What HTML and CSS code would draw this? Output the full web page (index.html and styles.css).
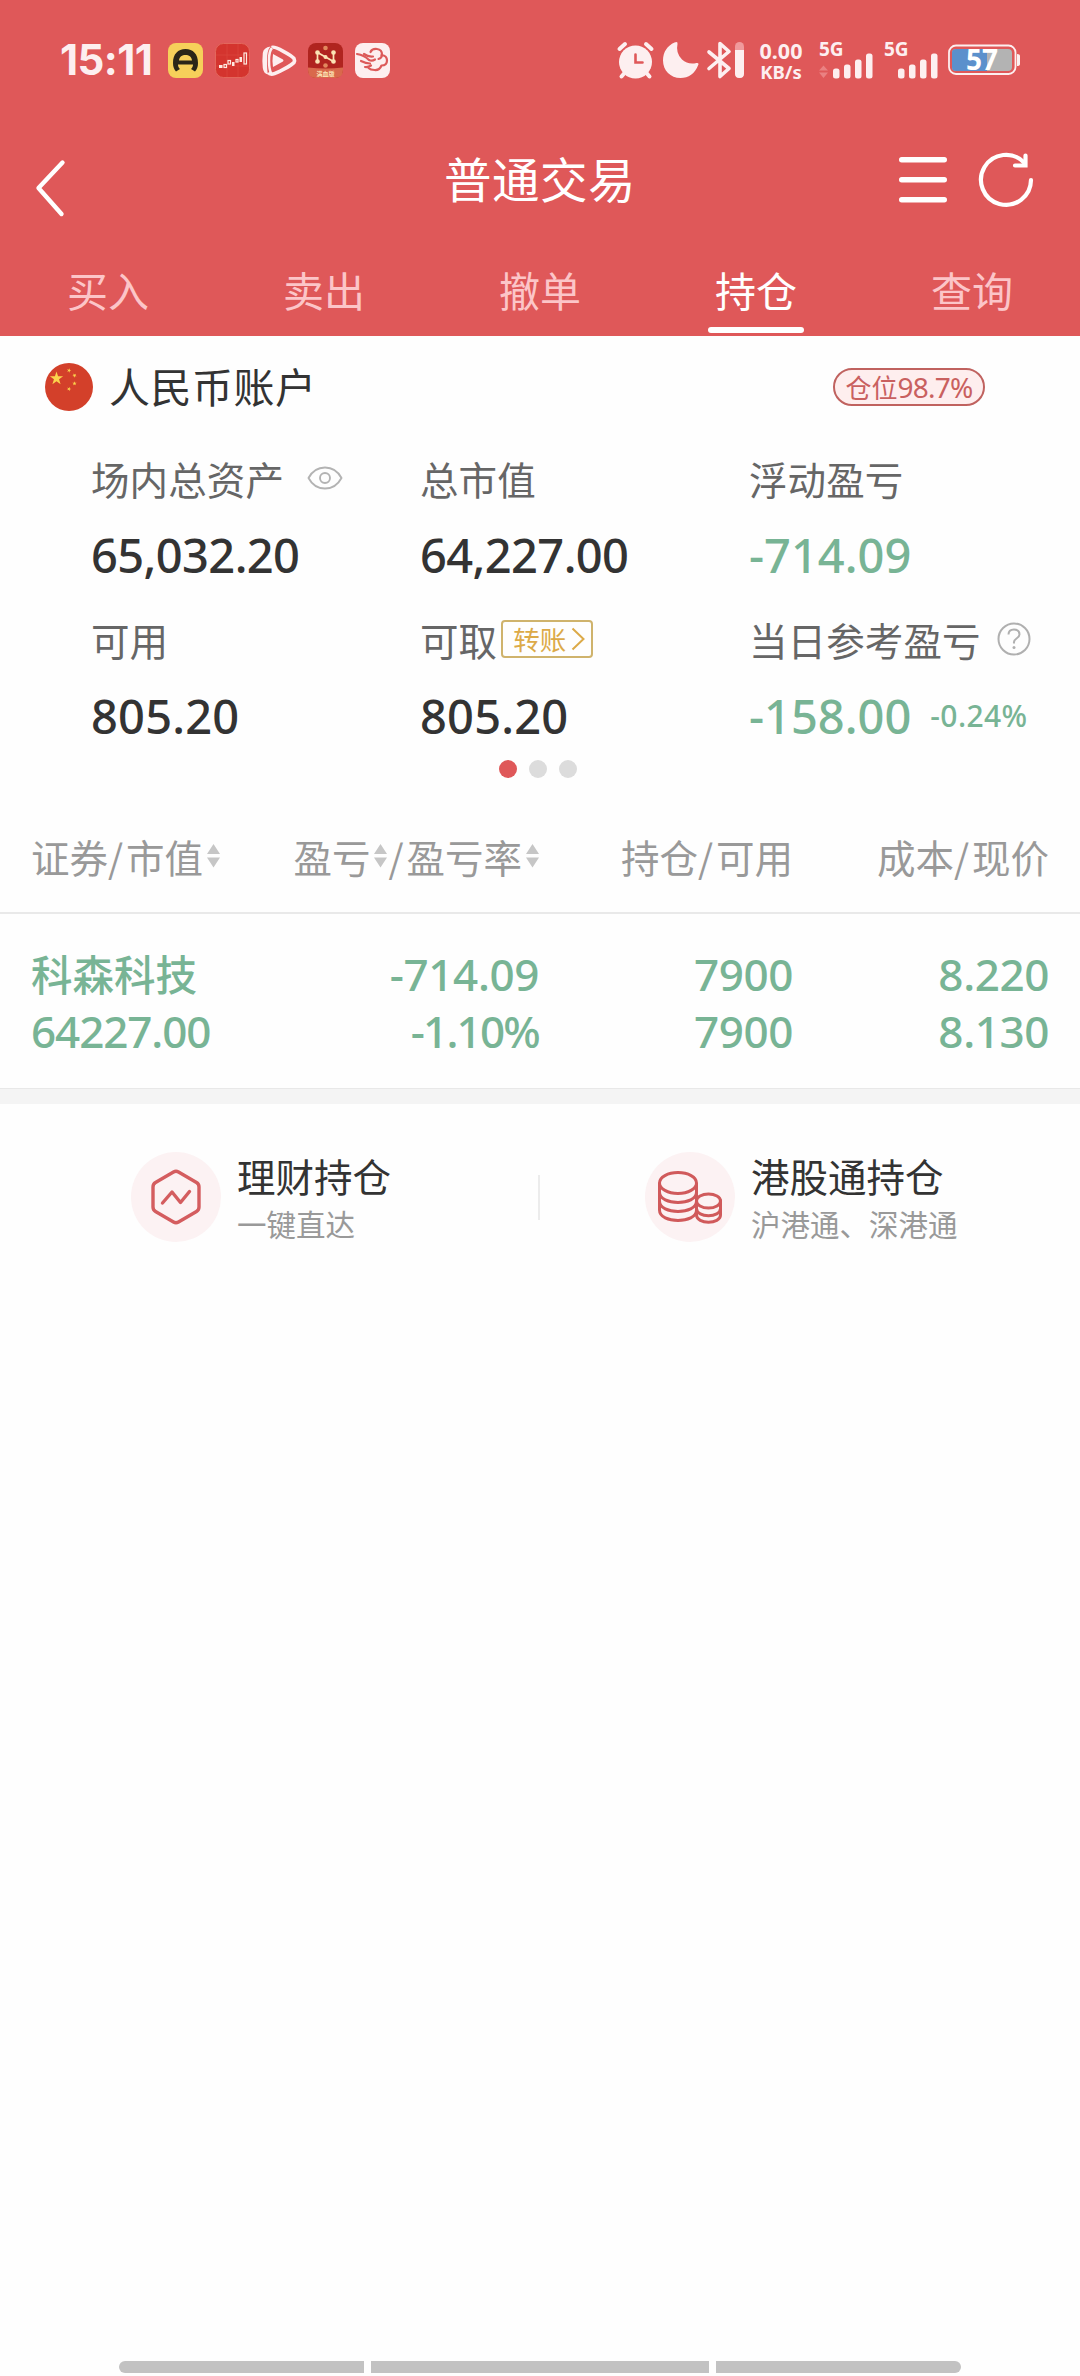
FILE: index.html
```html
<!DOCTYPE html>
<html lang="zh-CN">
<head>
<meta charset="utf-8">
<title>普通交易</title>
<link rel="stylesheet" href="styles.css">
</head>
<body>
<header class="header">
  <div class="status">
    <div class="status-left">
      <span class="clock">15:11</span>
      <div class="apps">
        <svg width="35" height="35" viewBox="0 0 35 35"><rect width="35" height="35" rx="8" fill="#f6d05a"/><path d="M5 20C5 11 10 6 17.500 6S30 11 30 20C30 24 29 26 27 28.500L23 26C24.500 24.500 25 23 25 21.500H10C10 23 10.500 24.500 12 26L8 28.500C6 26 5 24 5 20ZM11 17.500H24C23.500 13.500 21 12 17.500 12S11.500 13.500 11 17.500Z" fill="#2a2618"/></svg>
        <svg width="35" height="35" viewBox="0 0 35 35"><rect x=".5" y=".5" width="34" height="34" rx="8" fill="#d4342e" stroke="#e3675c"/><path d="M12 1v33M23 1v33M1 12h33M1 23h33" stroke="#dc4a42" stroke-width=".6"/><g fill="#ffe9e0"><rect x="4" y="22" width="3.500" height="3"/><rect x="17" y="19" width="2.500" height="4"/><rect x="24.500" y="14" width="2.500" height="5"/></g><g fill="none" stroke="#ffe9e0" stroke-width="1.200"><rect x="9" y="21.500" width="2.500" height="3"/><rect x="13" y="17.500" width="2.500" height="3.500"/><rect x="21" y="16.500" width="2" height="2.500"/><rect x="29" y="10" width="2.500" height="11"/></g></svg>
        <svg width="35" height="33" viewBox="1.500 0 35 33"><path d="M11.500 3.500C14 1.500 32 12 33.500 14.500Q34.500 16.500 33.500 18.500C31 21.500 16 29.500 12.500 30Q9 30.500 8 28.500" fill="none" stroke="#fdeff0" stroke-width="3.600"/><path d="M10 2.500Q3 3.500 2.300 9Q1.500 16.500 2.300 24Q3 29.500 7.500 30.500Q6.500 27 6.500 16.500Q6.500 6 10 2.500Z" fill="#fdeff0"/><path d="M11.500 4Q8.500 7 8.500 16.500Q8.500 26 11 30" fill="none" stroke="#fdeff0" stroke-width="2.500"/><path d="M12.500 10L22.500 15.500Q23.500 16.500 22.500 17.500L12.500 23Q11.500 16.500 12.500 10Z" fill="#fdeff0"/></svg>
        <svg width="35" height="35" viewBox="0 0 35 35"><rect width="35" height="35" rx="8" fill="#b0241f"/><path d="M0 24.500Q17.500 26.500 35 24.500V27Q35 35 27 35H8Q0 35 0 27Z" fill="#d9694c"/><g stroke="#fbe3b4" stroke-width="1.700" fill="#fbe3b4"><path d="M9.500 18.500V9.500L25.500 18.500V9.500" fill="none"/><circle cx="9.500" cy="9.500" r="1.500"/><circle cx="9.500" cy="18.500" r="1.500"/><circle cx="25.500" cy="9.500" r="1.500"/><circle cx="25.500" cy="18.500" r="1.500"/><circle cx="17.500" cy="14" r="1.200"/></g><circle cx="17.500" cy="5" r="2.300" fill="#e2885e"/><circle cx="17.500" cy="22.500" r="2.300" fill="#e2885e"/><text x="17.500" y="33" class="app-text">满血版</text></svg>
        <svg width="35" height="35" viewBox="0 0 35 35"><rect width="35" height="35" rx="8" fill="#fdeff0"/><g fill="none" stroke="#dc5a5a" stroke-width="2.200" stroke-linecap="round" stroke-linejoin="round"><path d="M2 11Q9 12 14 17Q17 18.500 20 16.500"/><path d="M6 18Q11 20.500 15 20.500M10 24Q13 24.500 16 22.500"/><path d="M9 11Q13 14 18 13.500M15.500 9Q17 5.500 22 6Q27 6.500 27 11.500Q27 15 23.500 16"/><path d="M26.500 12Q32 12.500 32 17.500Q32 22.500 26.500 22.500Q24.500 27.500 19.500 27Q15.500 27 13.500 25"/></g></svg>
      </div>
    </div>
    <div class="status-right">
      <svg class="i-alarm" width="38" height="38" viewBox="0 0 38 38"><circle cx="18.500" cy="21" r="16.500" fill="#fdeff0"/><path d="M2.500 8L8 3M29 3L34.500 8M7.500 32L4.500 35.500M29.500 32L32.500 35.500" stroke="#fdeff0" stroke-width="4" stroke-linecap="round"/><path d="M18.500 13.500V21.500H25.500" fill="none" stroke="#df5859" stroke-width="2.600" stroke-linecap="round"/></svg>
      <svg class="i-moon" width="38" height="38" viewBox="0 0 38 38"><path d="M12.500 1.500Q16 0 15.500 3Q13.500 12 20 18.500Q26 24 34.500 22Q37.500 21.500 36 24.500C33 32.500 26.500 37 18.500 37C8.500 37 1 29.500 1 19.500C1 11 5.500 4.500 12.500 1.500Z" fill="#fdeff0"/></svg>
      <svg class="i-bt" width="37" height="38" viewBox="0 0 37 38"><path d="M2 11L22 27.500L13 35.500V2.500L22 10.500L2 27.500" fill="none" stroke="#fdeff0" stroke-width="3.600" stroke-linejoin="round" stroke-linecap="round"/><rect x="28" y="1" width="9" height="36" rx="4.500" fill="#f09a9c"/><path d="M28 9H37V32.500Q37 37 32.500 37T28 32.500Z" fill="#fdeff0"/></svg>
      <div class="speed"><span class="speed-n">0.00</span><span class="speed-u">KB/s</span></div>
      <svg class="i-sig" width="56" height="38" viewBox="0 0 56 38"><text x="0" y="15" class="sig-text">5G</text><path d="M0 29.500L4.500 24.500L9 29.500ZM0 31.500H9L4.500 37Z" fill="#ea8182"/><g fill="#fdeff0"><rect x="14" y="27.500" width="6.500" height="10" rx="2.500"/><rect x="25" y="23.500" width="6.500" height="14" rx="2.500"/><rect x="36" y="18.500" width="6.500" height="19" rx="2.500"/><rect x="47" y="12.500" width="6.500" height="25" rx="2.500"/></g></svg>
      <svg class="i-sig2" width="56" height="38" viewBox="0 0 56 38"><text x="0" y="15" class="sig-text">5G</text><g fill="#fdeff0"><rect x="14" y="27.500" width="6.500" height="10" rx="2.500"/><rect x="25" y="23.500" width="6.500" height="14" rx="2.500"/><rect x="36" y="18.500" width="6.500" height="19" rx="2.500"/><rect x="47" y="12.500" width="6.500" height="25" rx="2.500"/></g></svg>
      <svg class="i-bat" width="73" height="32" viewBox="0 0 73 32"><rect x="1" y="1.500" width="66.500" height="28.500" rx="7" fill="none" stroke="#fdeff0" stroke-width="1.800"/><rect x="4" y="5" width="60" height="22" rx="4" fill="#b3b3b3"/><path d="M8 5H39V27H8Q4 27 4 23V9Q4 5 8 5Z" fill="#5b90cc"/><path d="M69 10Q72 10 72 12V20Q72 22 69 22Z" fill="#fdeff0"/><text x="34" y="26" class="bat-text">57</text></svg>
    </div>
  </div>
  <nav class="bar">
    <svg class="back" width="40" height="64" viewBox="0 0 40 64"><path d="M34.500 6.500L10.500 32L33.500 58" fill="none" stroke="#fff" stroke-width="4.400" stroke-linecap="round" stroke-linejoin="round"/></svg>
    <h1 class="title">普通交易</h1>
    <div class="tools">
      <svg width="48" height="46" viewBox="0 0 48 46"><path d="M2.700 2.800H45.300M2.700 22.800H45.300M2.700 42.800H45.300" stroke="#fff" stroke-width="5.400" stroke-linecap="round"/></svg>
      <svg width="56" height="56" viewBox="0 0 56 56"><path d="M53 28A25 25 0 1 1 46 10.500" fill="none" stroke="#fff" stroke-width="4.200" stroke-linecap="round"/><path d="M47.500 3.500V13.500H37" fill="none" stroke="#fff" stroke-width="4.200" stroke-linecap="round"/></svg>
    </div>
  </nav>
  <nav class="tabs">
    <a class="tab">买入</a><a class="tab">卖出</a><a class="tab">撤单</a><a class="tab active">持仓</a><a class="tab">查询</a>
  </nav>
</header>
<main>
  <section class="account">
    <svg width="48" height="48" viewBox="0 0 48 48"><circle cx="24" cy="24" r="24" fill="#d3402a"/><defs><path id="star" d="M0-1L.225-.309H.951L.363.118L.588.809L0 .382L-.588.809L-.363.118L-.951-.309H-.225Z"/></defs><g fill="#fbd44c"><use href="#star" transform="translate(11.500 15.500) scale(7)"/><use href="#star" transform="translate(24 7.500) rotate(20) scale(2.300)"/><use href="#star" transform="translate(29.500 12.500) rotate(40) scale(2.300)"/><use href="#star" transform="translate(29.500 20.500) scale(2.300)"/><use href="#star" transform="translate(24 26) rotate(20) scale(2.300)"/></g></svg>
    <h2 class="account-name">人民币账户</h2>
    <span class="position">仓位<span class="position-n">98.7%</span></span>
  </section>
  <section class="assets">
    <div class="cell">
      <div class="label">场内总资产<svg class="eye" width="36" height="26" viewBox="0 0 36 26"><path d="M1.500 13C5 6.500 11 2.500 18 2.500S31 6.500 34.500 13C31 19.500 25 23.500 18 23.500S5 19.500 1.500 13Z" fill="none" stroke="#b3b3b3" stroke-width="1.900" stroke-linejoin="round"/><circle cx="18" cy="13" r="5" fill="none" stroke="#b3b3b3" stroke-width="1.900"/></svg></div>
      <div class="value long">65,032.20</div>
    </div>
    <div class="cell"><div class="label">总市值</div><div class="value long">64,227.00</div></div>
    <div class="cell"><div class="label">浮动盈亏</div><div class="value down">-714.09</div></div>
    <div class="cell"><div class="label">可用</div><div class="value short">805.20</div></div>
    <div class="cell">
      <div class="label">可取<span class="transfer">转账<svg width="14" height="24" viewBox="0 0 14 24"><path d="M1.500 1.500L12.500 12L1.500 22.500" fill="none" stroke="#dcaa48" stroke-width="2"/></svg></span></div>
      <div class="value short">805.20</div>
    </div>
    <div class="cell">
      <div class="label">当日参考盈亏<svg class="help" width="34" height="34" viewBox="0 0 34 34"><circle cx="17" cy="17" r="15.500" fill="none" stroke="#b0b0b0" stroke-width="2"/><path d="M11.500 12.500Q11.500 7.500 17 7.500T22.500 12.500Q22.500 14.500 19.500 16.500T17 21V21.500" fill="none" stroke="#b0b0b0" stroke-width="2"/><circle cx="17" cy="25.500" r="1.500" fill="#b0b0b0"/></svg></div>
      <div class="value down">-158.00<span class="rate">-0.24%</span></div>
    </div>
  </section>
  <div class="dots"><i class="dot on"></i><i class="dot"></i><i class="dot"></i></div>
  <section class="holdings">
    <svg class="defs" width="0" height="0"><defs><g id="sort"><path d="M0 10L6.500 0L13 10ZM0 13.500H13L6.500 23.500Z" fill="#c6c6c6"/></g></defs></svg>
    <div class="grid head">
      <div class="c1">证券<span class="slash">/</span>市值<svg class="sort" width="13" height="24"><use href="#sort"/></svg></div>
      <div>盈亏<svg class="sort mid" width="13" height="24"><use href="#sort"/></svg><span class="slash">/</span>盈亏率<svg class="sort" width="13" height="24"><use href="#sort"/></svg></div>
      <div>持仓<span class="slash">/</span>可用</div>
      <div>成本<span class="slash">/</span>现价</div>
    </div>
    <div class="grid row">
      <div class="c1 name">科森科技</div><div>-714.09</div><div>7900</div><div>8.220</div>
      <div class="c1 market">64227.00</div><div class="percent">-1.10%</div><div>7900</div><div>8.130</div>
    </div>
  </section>
  <section class="links">
    <a class="link">
      <svg width="90" height="90" viewBox="0 0 90 90"><circle cx="45" cy="45" r="45" fill="#fcf2f3"/><path d="M42.500 20Q45 18.500 47.500 20L65.500 30.500Q68 32 68 35V55Q68 58 65.500 59.500L47.500 70Q45 71.500 42.500 70L24.500 59.500Q22 58 22 55V35Q22 32 24.500 30.500Z" fill="none" stroke="#d45d5f" stroke-width="3.400"/><path d="M31.500 51L41 40L49.500 50.500L58.500 39.500" fill="none" stroke="#d45d5f" stroke-width="3.400" stroke-linecap="round" stroke-linejoin="round"/></svg>
      <span class="link-text"><b>理财持仓</b><small>一键直达</small></span>
    </a>
    <i class="divider"></i>
    <a class="link">
      <svg width="90" height="90" viewBox="0 0 90 90"><circle cx="45" cy="45" r="45" fill="#fcf2f3"/><g fill="none" stroke="#d05a5b" stroke-width="3"><ellipse cx="33" cy="31" rx="18.500" ry="10.500"/><path d="M14.500 31V58C14.500 72 51.500 72 51.500 58V31M14.500 40C14.500 54 51.500 54 51.500 40M14.500 49C14.500 63 51.500 63 51.500 49"/><g fill="#fcf2f3"><path d="M51.500 49V63C51.500 72.500 75.500 72.500 75.500 63V49Z"/><ellipse cx="63.500" cy="49" rx="12" ry="7"/></g><path d="M51.500 56.500C51.500 66 75.500 66 75.500 56.500"/></g></svg>
      <span class="link-text"><b>港股通持仓</b><small>沪港通、深港通</small></span>
    </a>
  </section>
</main>
<footer class="gesture"><i></i><i class="wide"></i><i></i></footer>
</body>
</html>
```
FILE: styles.css
```css
* { box-sizing: border-box; }
body {
  margin: 0;
  width: 1080px;
  height: 2376px;
  display: flex;
  flex-direction: column;
  background: #fefefe;
  color: #333;
  font-family: "Noto Sans CJK SC", sans-serif;
  overflow: hidden;
}
svg { display: block; flex: none; overflow: visible; }
h1, h2 { margin: 0; font-weight: 400; }

.header { background: #df5859; color: #fff; height: 336px; }
.status { height: 120px; display: flex; justify-content: space-between; padding: 0 59px 0 60px; color: #fdeff0; }
.status-left, .status-right { display: flex; align-items: center; }
.clock { font: 700 42px/60px Inter, sans-serif; width: 108px; letter-spacing: -.6px; }
.apps { display: flex; align-items: center; gap: 11.8px; }
.app-text { font: 700 6px "Noto Sans CJK SC", sans-serif; fill: #fbe3b4; text-anchor: middle; }
.i-moon { margin-left: 7px; }
.i-bt { margin-left: 7px; }
.speed { display: flex; flex-direction: column; align-items: center; width: 48px; margin: 1px 14px 0 13px; font: 700 20px/21px "Noto Sans", sans-serif; }
.speed-n { font-size: 21.500px; }
.speed-u { font-size: 18.500px; }
.sig-text { font: 700 19px "Noto Sans", sans-serif; fill: #fdeff0; }
.i-sig2 { margin-left: 9px; }
.i-bat { margin-left: 8px; }
.bat-text { font: 700 28px "Noto Sans", sans-serif; fill: #fff; text-anchor: middle; }

.bar { height: 120px; display: grid; grid-template-columns: 240px 1fr 240px; align-items: center; padding: 0 46px 0 28px; }
.back { margin-top: 16px; }
.title { font-size: 47.500px; line-height: 60px; text-align: center; padding-left: 18px; margin-top: -5px; letter-spacing: .5px; }
.tools { display: flex; justify-content: flex-end; align-items: center; gap: 31px; }

.tabs { height: 96px; display: grid; grid-template-columns: repeat(5, 1fr); }
.tab { position: relative; text-align: center; font-size: 41px; line-height: 60px; padding-top: 19px; color: #fcc5c8; }
.tab.active { color: #fff; }
.tab.active::after { content: ""; position: absolute; left: 60px; bottom: 3px; width: 96px; height: 6px; border-radius: 3px; background: #fff; }

.account { display: flex; align-items: center; height: 102px; padding: 0 95px 0 45px; }
.account-name { font-size: 41px; line-height: 60px; margin: -4px auto 0 16px; letter-spacing: .5px; }
.position { display: flex; align-items: center; height: 38px; width: 152px; justify-content: center; border: 2px solid #c0625f; border-radius: 19px; background: #feeeee; color: #c9605f; font-size: 26px; line-height: 34px; }
.position-n { font: 400 28px/34px "Noto Sans", sans-serif; letter-spacing: -.8px; }

.assets { display: grid; grid-template-columns: 329px 329px 1fr; row-gap: 33px; padding: 16px 0 0 91px; }
.label { display: flex; align-items: center; height: 48px; font-size: 38.500px; line-height: 48px; letter-spacing: .1px; color: #666; white-space: nowrap; }
.value { height: 56px; margin-top: 24px; padding-top: 2px; font: 500 47px/56px "Noto Sans", sans-serif; white-space: nowrap; display: flex; align-items: center; }
.long { letter-spacing: -.6px; }
.short { letter-spacing: .2px; }
.down { color: #78b495; }
.rate { font-size: 30px; margin-left: 19px; letter-spacing: .4px; }
.eye { margin-left: 23px; }
.help { margin-left: 16px; }
.transfer { display: flex; align-items: center; gap: 5px; width: 92px; height: 38px; margin-left: 4px; padding-left: 10px; border: 2px solid #cfb36c; border-radius: 4px; color: #dcaa48; font-size: 26.500px; line-height: 32px; letter-spacing: 0; }

.dots { display: flex; justify-content: center; gap: 12px; padding: 17px 4px 0 0; }
.dot { width: 18px; height: 18px; border-radius: 50%; background: #dcdcdc; }
.dot.on { background: #df5859; }

.holdings { margin-top: 21px; }
.defs { position: absolute; }
.grid { display: grid; grid-template-columns: 201px 307px 254px 256px; padding: 0 31px 0 31px; }
.grid > div { display: flex; justify-content: flex-end; align-items: center; white-space: nowrap; }
.grid > .c1 { justify-content: flex-start; }
.head { height: 115px; border-bottom: 2px solid #e9e9e9; color: #999; font-size: 38.500px; line-height: 48px; }
.slash { width: 18px; }
.sort { margin-left: 4px; }
.sort.mid { margin-right: 1px; }
.row { height: 175px; padding-top: 32px; grid-auto-rows: 57px; border-bottom: 1px solid #e8e8e8; color: #78b495; font: 500 44px/57px "Noto Sans", sans-serif; letter-spacing: -.4px; }
.row .name { font: 500 41.500px/57px "Noto Sans CJK SC", sans-serif; padding-bottom: 3px; letter-spacing: 0; }
.row .market { letter-spacing: -1.1px; }
.row .percent { letter-spacing: -1.8px; }

.links { border-top: 15px solid #f4f4f4; height: 201px; display: flex; align-items: center; padding-left: 131px; }
.link { display: flex; align-items: center; gap: 16px; }
.link-text { display: flex; flex-direction: column; justify-content: center; }
.link-text b { font-weight: 400; font-size: 38.500px; line-height: 52px; margin-top: -1px; }
.link-text small { font-size: 29.500px; line-height: 44px; color: #999; }
.divider { width: 2px; height: 45px; background: #ececec; margin: 0 105px 0 147px; }

.gesture { margin-top: auto; display: flex; justify-content: center; gap: 7px; padding-bottom: 3px; }
.gesture i { width: 245px; height: 12px; background: #c2c2c2; border-radius: 6px 0 0 6px; }
.gesture i:last-child { border-radius: 0 6px 6px 0; }
.gesture .wide { width: 338px; border-radius: 0; }
```
